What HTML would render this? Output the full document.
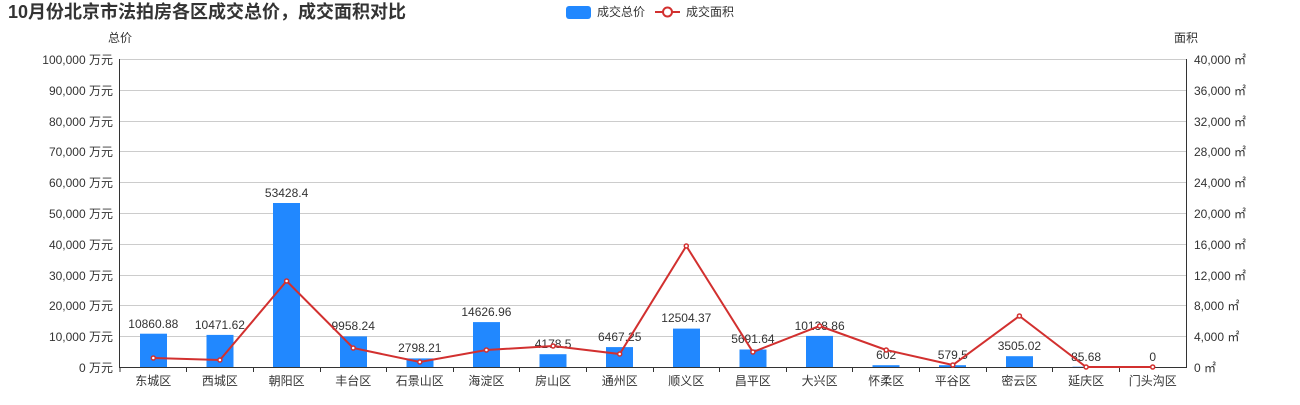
<!DOCTYPE html>
<html><head><meta charset="utf-8"><style>
body{margin:0;background:#fff;width:1300px;height:400px;overflow:hidden;font-family:"Liberation Sans","Noto Sans CJK SC",sans-serif}
</style></head><body>
<svg width="1300" height="400" xmlns="http://www.w3.org/2000/svg" font-family="Liberation Sans, Noto Sans CJK SC, sans-serif">
<text x="8" y="18" font-size="18" font-weight="bold" fill="#333">10月份北京市法拍房各区成交总价，成交面积对比</text>
<rect x="566" y="6" width="25" height="13" rx="3" fill="#2188ff"/>
<text x="597" y="16" font-size="12" fill="#333">成交总价</text>
<line x1="655" y1="12" x2="680" y2="12" stroke="#d2302f" stroke-width="2"/>
<circle cx="667.5" cy="12" r="4.5" fill="#fff" stroke="#d2302f" stroke-width="2"/>
<text x="686" y="16" font-size="12" fill="#333">成交面积</text>
<text x="108" y="42" font-size="12" fill="#333">总价</text>
<text x="1174" y="42" font-size="12" fill="#333">面积</text>
<g stroke="#ccc" stroke-width="1">
<line x1="120" y1="59.5" x2="1186" y2="59.5"/><line x1="120" y1="90.5" x2="1186" y2="90.5"/><line x1="120" y1="121.5" x2="1186" y2="121.5"/><line x1="120" y1="151.5" x2="1186" y2="151.5"/><line x1="120" y1="182.5" x2="1186" y2="182.5"/><line x1="120" y1="213.5" x2="1186" y2="213.5"/><line x1="120" y1="244.5" x2="1186" y2="244.5"/><line x1="120" y1="275.5" x2="1186" y2="275.5"/><line x1="120" y1="305.5" x2="1186" y2="305.5"/><line x1="120" y1="336.5" x2="1186" y2="336.5"/>
</g>
<g stroke="#333" stroke-width="1">
<line x1="119.5" y1="59" x2="119.5" y2="367"/><line x1="1186.5" y1="59" x2="1186.5" y2="367"/><line x1="119" y1="367.5" x2="1187" y2="367.5"/>
</g>
<g font-size="12" fill="#333" text-anchor="end">
<text x="113" y="64">100,000 万元</text><text x="113" y="95">90,000 万元</text><text x="113" y="126">80,000 万元</text><text x="113" y="156">70,000 万元</text><text x="113" y="187">60,000 万元</text><text x="113" y="218">50,000 万元</text><text x="113" y="249">40,000 万元</text><text x="113" y="280">30,000 万元</text><text x="113" y="310">20,000 万元</text><text x="113" y="341">10,000 万元</text><text x="113" y="372">0 万元</text>
</g>
<g font-size="12" fill="#333">
<text x="1194" y="64">40,000 ㎡</text><text x="1194" y="95">36,000 ㎡</text><text x="1194" y="126">32,000 ㎡</text><text x="1194" y="156">28,000 ㎡</text><text x="1194" y="187">24,000 ㎡</text><text x="1194" y="218">20,000 ㎡</text><text x="1194" y="249">16,000 ㎡</text><text x="1194" y="280">12,000 ㎡</text><text x="1194" y="310">8,000 ㎡</text><text x="1194" y="341">4,000 ㎡</text><text x="1194" y="372">0 ㎡</text>
</g>
<g fill="#2188ff">
<rect x="140" y="333.7" width="27" height="33.3"/><rect x="206.5" y="334.9" width="27" height="32.1"/><rect x="273" y="203" width="27" height="164"/><rect x="340" y="336.4" width="27" height="30.6"/><rect x="406.5" y="358.4" width="27" height="8.6"/><rect x="473" y="322.1" width="27" height="44.9"/><rect x="539.5" y="354.2" width="27" height="12.8"/><rect x="606" y="347.1" width="27" height="19.9"/><rect x="673" y="328.6" width="27" height="38.4"/><rect x="739.5" y="349.5" width="27" height="17.5"/><rect x="806" y="335.9" width="27" height="31.1"/><rect x="872.5" y="365.2" width="27" height="1.8"/><rect x="939" y="365.2" width="27" height="1.8"/><rect x="1006" y="356.2" width="27" height="10.8"/><rect x="1072.5" y="366.7" width="27" height="0.3"/>
</g>
<g font-size="12" fill="#333" text-anchor="middle">
<text x="153.3" y="328">10860.88</text><text x="219.9" y="329">10471.62</text><text x="286.6" y="197">53428.4</text><text x="353.2" y="330">9958.24</text><text x="419.8" y="352">2798.21</text><text x="486.4" y="316">14626.96</text><text x="553.1" y="348">4178.5</text><text x="619.7" y="341">6467.25</text><text x="686.3" y="322">12504.37</text><text x="752.9" y="343">5691.64</text><text x="819.6" y="330">10138.86</text><text x="886.2" y="359">602</text><text x="952.8" y="359">579.5</text><text x="1019.4" y="350">3505.02</text><text x="1086.1" y="361">85.68</text><text x="1152.7" y="361">0</text>
</g>
<g stroke="#333">
<line x1="186.5" y1="367" x2="186.5" y2="372"/><line x1="253.5" y1="367" x2="253.5" y2="372"/><line x1="320.5" y1="367" x2="320.5" y2="372"/><line x1="386.5" y1="367" x2="386.5" y2="372"/><line x1="453.5" y1="367" x2="453.5" y2="372"/><line x1="519.5" y1="367" x2="519.5" y2="372"/><line x1="586.5" y1="367" x2="586.5" y2="372"/><line x1="653.5" y1="367" x2="653.5" y2="372"/><line x1="719.5" y1="367" x2="719.5" y2="372"/><line x1="786.5" y1="367" x2="786.5" y2="372"/><line x1="852.5" y1="367" x2="852.5" y2="372"/><line x1="919.5" y1="367" x2="919.5" y2="372"/><line x1="986.5" y1="367" x2="986.5" y2="372"/><line x1="1052.5" y1="367" x2="1052.5" y2="372"/><line x1="1119.5" y1="367" x2="1119.5" y2="372"/><line x1="120" y1="367" x2="120" y2="372"/>
</g>
<g font-size="12" fill="#333" text-anchor="middle">
<text x="153.3" y="385">东城区</text><text x="219.9" y="385">西城区</text><text x="286.6" y="385">朝阳区</text><text x="353.2" y="385">丰台区</text><text x="419.8" y="385">石景山区</text><text x="486.4" y="385">海淀区</text><text x="553.1" y="385">房山区</text><text x="619.7" y="385">通州区</text><text x="686.3" y="385">顺义区</text><text x="752.9" y="385">昌平区</text><text x="819.6" y="385">大兴区</text><text x="886.2" y="385">怀柔区</text><text x="952.8" y="385">平谷区</text><text x="1019.4" y="385">密云区</text><text x="1086.1" y="385">延庆区</text><text x="1152.7" y="385">门头沟区</text>
</g>
<polyline fill="none" stroke="#d2302f" stroke-width="2" points="153.3,358 219.9,360 286.6,281 353.2,348 419.8,362 486.4,350 553.1,346 619.7,354 686.3,246 752.9,352 819.6,326 886.2,350 952.8,365 1019.4,316 1086.1,367 1152.7,367"/>
<g fill="#fff" stroke="#d2302f" stroke-width="1.5">
<circle cx="153.3" cy="358" r="2"/><circle cx="219.9" cy="360" r="2"/><circle cx="286.6" cy="281" r="2"/><circle cx="353.2" cy="348" r="2"/><circle cx="419.8" cy="362" r="2"/><circle cx="486.4" cy="350" r="2"/><circle cx="553.1" cy="346" r="2"/><circle cx="619.7" cy="354" r="2"/><circle cx="686.3" cy="246" r="2"/><circle cx="752.9" cy="352" r="2"/><circle cx="819.6" cy="326" r="2"/><circle cx="886.2" cy="350" r="2"/><circle cx="952.8" cy="365" r="2"/><circle cx="1019.4" cy="316" r="2"/><circle cx="1086.1" cy="367" r="2"/><circle cx="1152.7" cy="367" r="2"/>
</g>
</svg>
</body></html>
